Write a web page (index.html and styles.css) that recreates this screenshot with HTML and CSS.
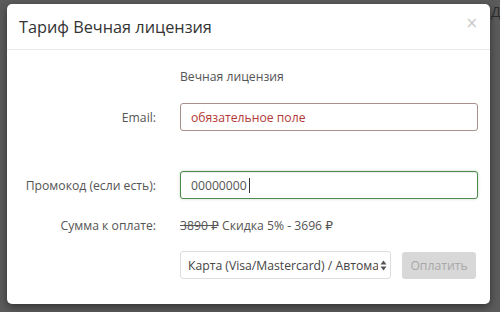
FILE: index.html
```html
<!DOCTYPE html>
<html lang="ru">
<head>
    <meta charset="UTF-8">
    <title>Тариф Вечная лицензия</title>
    <link rel="stylesheet" href="styles.css">
</head>
<body>
    <div class="backdrop">
        <span class="page-letter">Д</span>
        <div class="modal">
            <div class="modal-header">
                <h4 class="modal-title">Тариф Вечная лицензия</h4>
                <button class="close" type="button">&times;</button>
            </div>
            <form class="modal-body">
                <div class="row row-plan">
                    <span></span>
                    <span class="plan">Вечная лицензия</span>
                </div>
                <div class="row row-email">
                    <label for="email">Email:</label>
                    <input id="email" class="field field-error" type="text" placeholder="обязательное поле">
                </div>
                <div class="row row-promo">
                    <label for="promo">Промокод (если есть):</label>
                    <div class="promo-wrap">
                        <input id="promo" class="field field-ok" type="text" value="00000000">
                        <span class="caret"></span>
                    </div>
                </div>
                <div class="row row-sum">
                    <label>Сумма к оплате:</label>
                    <span class="sum"><s>3890 ₽</s> Скидка 5% - 3696 ₽</span>
                </div>
                <div class="row row-pay">
                    <span></span>
                    <div class="pay">
                        <div class="select-wrap">
                            <select class="field select">
                                <option>Карта (Visa/Mastercard) / Автоматически</option>
                            </select>
                            <svg class="arrows" width="7" height="11" viewBox="0 0 7 11">
                                <path d="M0.5 4.5 L3.5 0.5 L6.5 4.5 Z M0.5 6.5 L3.5 10.5 L6.5 6.5 Z" fill="#555"/>
                            </svg>
                        </div>
                        <button class="btn-pay" type="button" disabled>Оплатить</button>
                    </div>
                </div>
            </form>
        </div>
    </div>
</body>
</html>
```

FILE: styles.css
```css
* {
    box-sizing: border-box;
}

body {
    margin: 0;
    font-family: "Open Sans", "DejaVu Sans", sans-serif;
    font-size: 12.2px;
    color: #555;
}

.backdrop {
    position: relative;
    width: 500px;
    height: 312px;
    background-color: #5b5b5b;
    padding: 4px 10px 0 7px;
    overflow: hidden;
}

.page-letter {
    position: absolute;
    top: 2px;
    left: 491px;
    font-size: 14px;
    color: #2a2a2a;
}

.modal {
    width: 483px;
    height: 300px;
    background-color: #fff;
    border-radius: 5px;
    box-shadow: 0 3px 8px rgba(0, 0, 0, 0.45);
}

/* Шапка */
.modal-header {
    display: flex;
    align-items: center;
    justify-content: space-between;
    padding: 13px 12px 12px;
    border-bottom: 1px solid #e8e8e8;
}

.modal-title {
    margin: 0;
    font-size: 16.3px;
    font-weight: normal;
    line-height: 20px;
    color: #333;
}

.close {
    align-self: flex-start;
    margin-top: -4px;
    border: none;
    background: none;
    padding: 0;
    font-family: "DejaVu Sans", sans-serif;
    font-size: 15px;
    line-height: 20px;
    color: #c8c8c8;
}

/* Форма */
.modal-body {
    margin: 0;
    padding: 16px 12px 0;
}

.row {
    display: grid;
    grid-template-columns: 137px 1fr;
    column-gap: 24px;
    align-items: center;
}

.row label {
    text-align: right;
    white-space: nowrap;
}

.row-plan {
    height: 20px;
}

.row-email {
    margin-top: 17px;
}

.row-promo {
    margin-top: 40px;
}

.row-sum {
    margin-top: 16px;
    height: 20px;
}

.row-pay {
    margin-top: 16px;
}

.field {
    height: 28px;
    width: 100%;
    padding: 0 10px;
    border: 1px solid #ccc;
    border-radius: 3px;
    font-family: "Open Sans", "DejaVu Sans", sans-serif;
    font-size: 12.2px;
    color: #555;
    background-color: #fff;
    outline: none;
}

.field-error {
    border-color: #a8918b;
}

.field-error::placeholder {
    color: #b33a36;
    opacity: 1;
}

.promo-wrap {
    position: relative;
}

.field-ok {
    border-color: #4f8a4f;
    box-shadow: inset 0 1px 1px rgba(0, 0, 0, 0.08), 0 0 3px rgba(80, 140, 80, 0.35);
}

.caret {
    position: absolute;
    left: 69px;
    top: 7px;
    width: 1px;
    height: 15px;
    background-color: #333;
}

.sum s {
    color: #555;
}

.pay {
    display: flex;
    align-items: center;
    gap: 11px;
}

.select-wrap {
    position: relative;
    width: 211px;
}

.select {
    appearance: none;
    -webkit-appearance: none;
    padding: 0 12px 0 7px;
    border-color: #ddd;
    color: #444;
}

.arrows {
    position: absolute;
    right: 4px;
    top: 9px;
}

.btn-pay {
    width: 74px;
    height: 27px;
    border: none;
    border-radius: 3px;
    background-color: #d8d8d8;
    color: #a8a8a8;
    font-family: "Open Sans", "DejaVu Sans", sans-serif;
    font-size: 12.2px;
}
```
